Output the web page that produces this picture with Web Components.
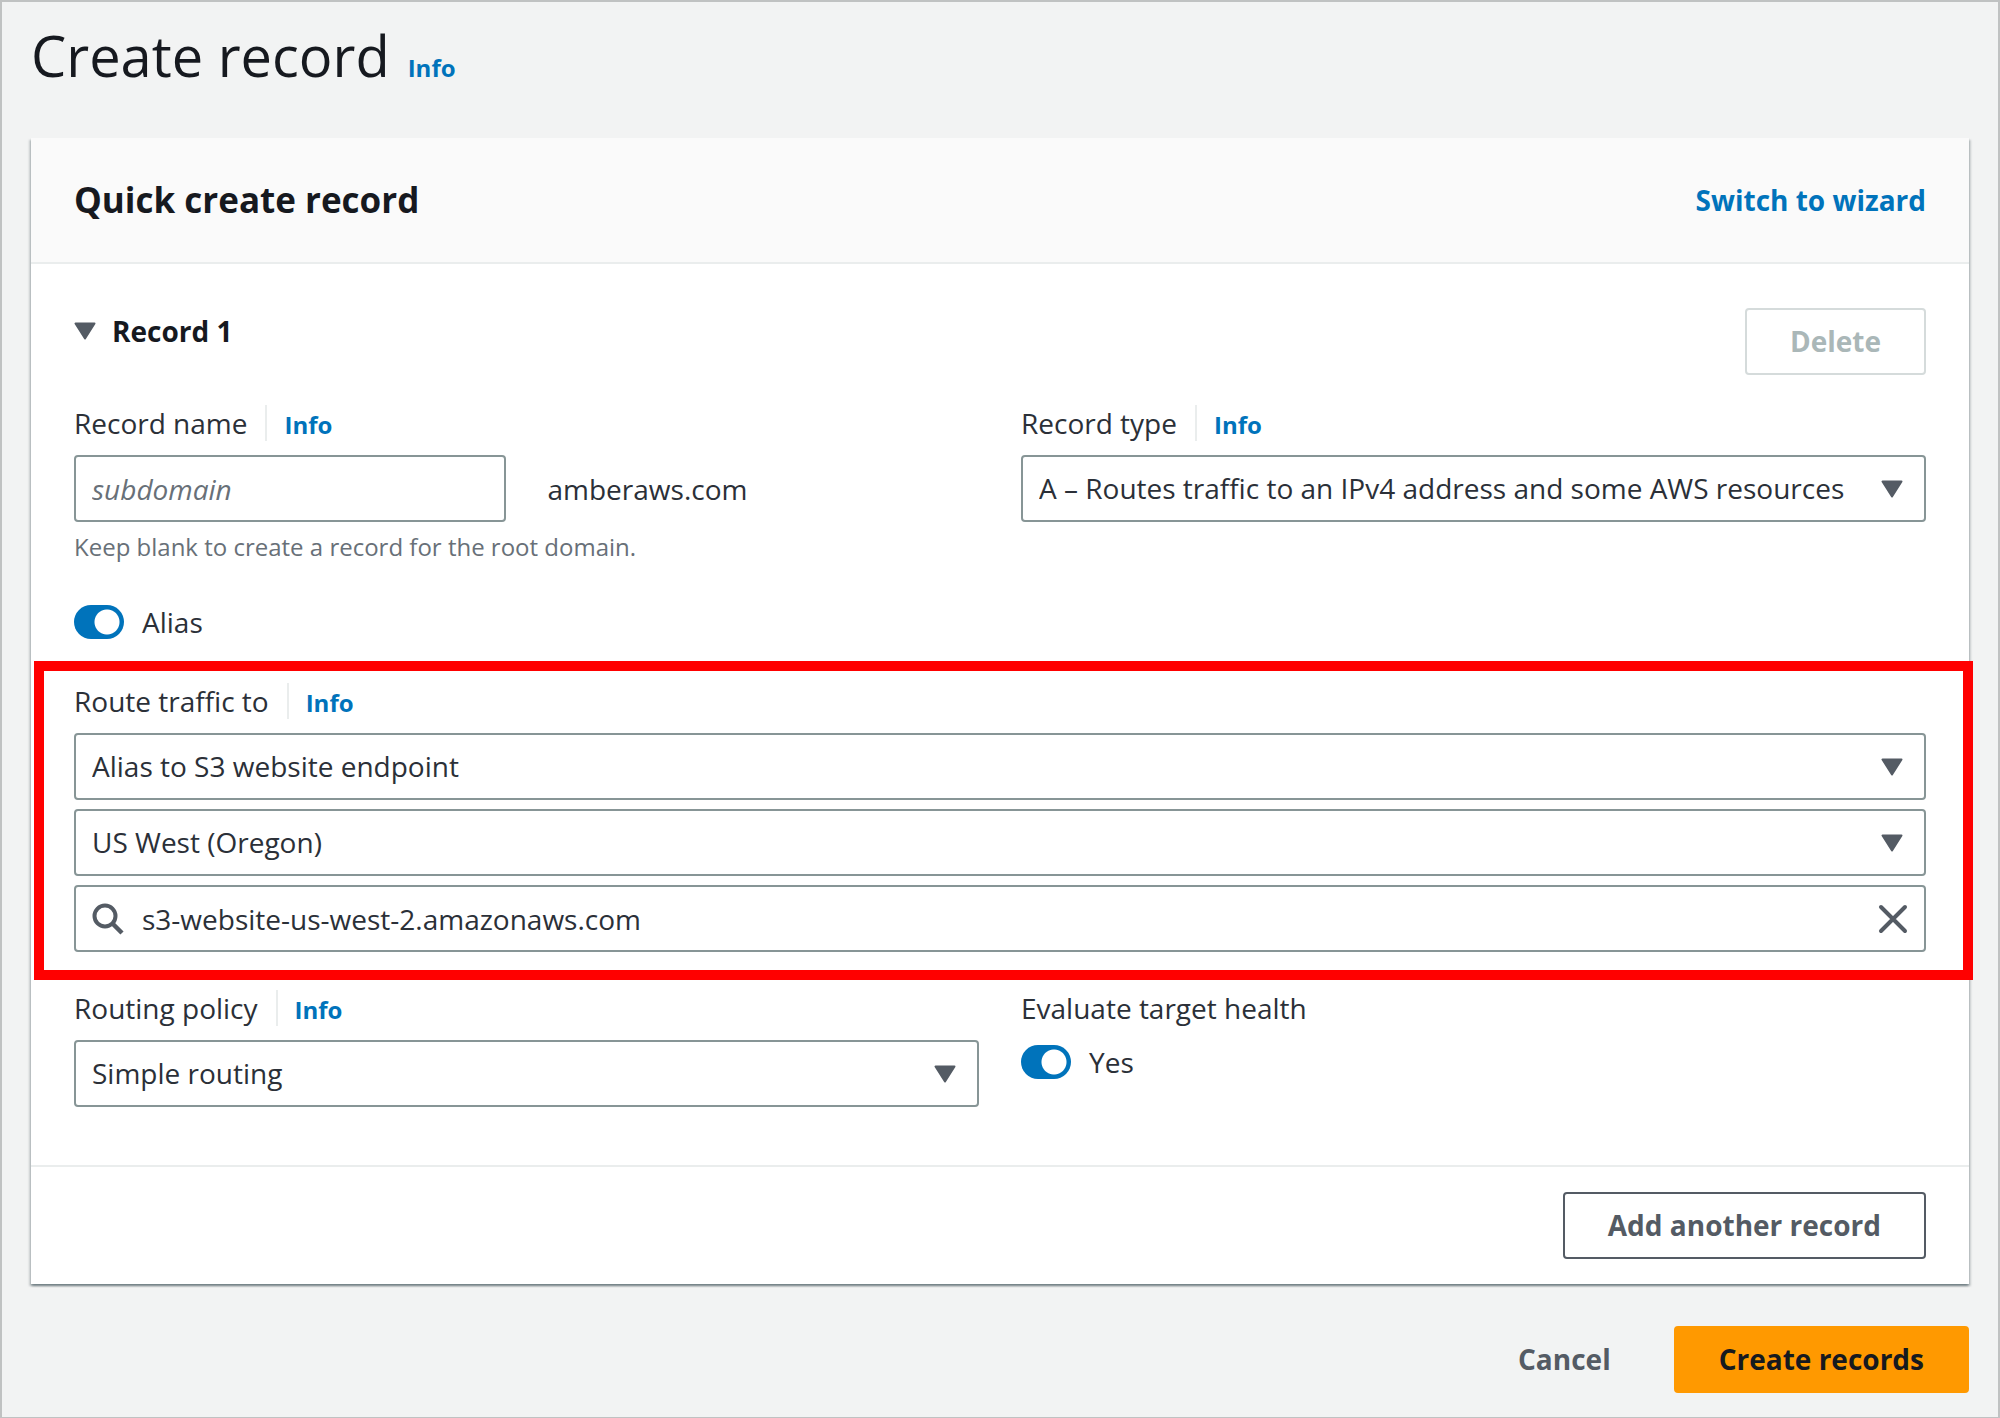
<!DOCTYPE html>
<html lang="en">
<head>
<meta charset="utf-8">
<meta name="viewport" content="width=device-width, initial-scale=1">
<title>Create record</title>
<style>
  :root {
    --text: #16191f;
    --body: #2b3038;
    --muted: #687078;
    --icon: #545b64;
    --blue: #0073bb;
    --line: #eaeded;
    --control: #879596;
  }
  body {
    margin: 0;
    background: #f2f3f3;
    color: var(--body);
    font: 28px/36px "Open Sans", "Noto Sans", sans-serif;
  }
</style>
</head>
<body>
<create-record-page></create-record-page>

<script>
const BASE = `
  *, *::before, *::after { box-sizing: border-box; }
  button, input, select { font: inherit; color: inherit; margin: 0; }
  button { cursor: pointer; }
  a { color: var(--blue); text-decoration: none; }
`;

const ARROW = `<svg viewBox="0 0 22 18" width="22" height="18" aria-hidden="true"><path d="M1.500 1.500h19L11 16.500z" fill="#545b64" stroke="#545b64" stroke-width="2" stroke-linejoin="round"/></svg>`;

class Base extends HTMLElement {
  constructor() {
    super();
    this.attachShadow({ mode: 'open' });
  }
  connectedCallback() {
    this.shadowRoot.innerHTML = `<style>${BASE}</style>` + this.render();
  }
  attr(name) { return this.getAttribute(name) || ''; }
}

/* Small "Info" help link */
customElements.define('info-link', class extends Base {
  render() {
    return `<style>
      :host { display: inline-block; }
      a { font-size: 24px; font-weight: 700; }
    </style><a href="#info">Info</a>`;
  }
});

/* Push button: normal, primary, link, or disabled */
customElements.define('app-button', class extends Base {
  render() {
    return `<style>
      :host { display: block; }
      button {
        display: block; height: 67px; padding: 0 43px 2px;
        border: 2px solid var(--icon); border-radius: 4px; background: #fff;
        color: var(--icon); font-weight: 700; white-space: nowrap;
      }
      :host([variant="primary"]) button { background: #ff9900; border-color: #ff9900; color: var(--text); }
      :host([variant="link"]) button { background: none; border-color: transparent; }
      button:disabled { color: #aab7b8; border-color: #d5dbdb; cursor: default; }
    </style><button type="button" ${this.hasAttribute('disabled') ? 'disabled' : ''}><slot></slot></button>`;
  }
});

/* Label line, with an optional help link after a thin rule */
const LABEL_CSS = `
  .label { display: flex; height: 36px; margin-bottom: 14px; white-space: nowrap; }
  .label info-link { margin-left: 18px; padding-left: 17px; border-left: 2px solid var(--line); }
`;
const labelRow = (el, id) => `<div class="label"><label for="${id}">${el.attr('label')}</label>${el.hasAttribute('info') ? '<info-link></info-link>' : ''}</div>`;

/* Drop-down */
customElements.define('select-field', class extends Base {
  render() {
    return `<style>${LABEL_CSS}
      :host { display: block; min-width: 0; }
      .box { display: grid; align-items: center; }
      .box > * { grid-area: 1 / 1; }
      select {
        appearance: none; width: 100%; height: 67px; padding: 0 60px 2px 16px;
        border: 2px solid var(--control); border-radius: 4px; background: #fff;
      }
      svg { justify-self: end; margin-right: 23px; pointer-events: none; }
    </style>
    ${this.hasAttribute('label') ? labelRow(this, 'control') : ''}
    <div class="box">
      <select id="control" ${this.hasAttribute('hint') ? `aria-label="${this.attr('hint')}"` : ''}><option>${this.attr('value')}</option></select>
      ${ARROW}
    </div>`;
  }
});

/* Record name input, followed by the hosted zone's domain */
customElements.define('name-field', class extends Base {
  render() {
    return `<style>${LABEL_CSS}
      :host { display: block; min-width: 0; }
      .row { display: grid; grid-template-columns: 1fr 1fr; gap: 42px; align-items: center; }
      input {
        width: 100%; height: 67px; padding: 0 16px;
        border: 2px solid var(--control); border-radius: 4px; background: #fff;
      }
      input::placeholder { color: var(--muted); font-style: italic; opacity: 1; }
      p { margin: 7px 0 0; font-size: 24px; color: var(--muted); }
    </style>
    ${labelRow(this, 'control')}
    <div class="row">
      <input id="control" type="text" placeholder="${this.attr('placeholder')}" aria-describedby="help">
      <span>${this.attr('suffix')}</span>
    </div>
    <p id="help">${this.attr('help')}</p>`;
  }
});

/* Search box with a clear button */
customElements.define('search-field', class extends Base {
  render() {
    return `<style>
      :host { display: block; }
      .box {
        display: flex; align-items: center; height: 67px; padding: 0 16px;
        border: 2px solid var(--control); border-radius: 4px; background: #fff;
      }
      input { flex: 1; min-width: 0; height: 60px; padding: 0; margin-left: 18px; border: 0; outline: 0; background: none; }
      button { display: flex; padding: 0; border: 0; background: none; }
      svg { display: block; fill: none; stroke: var(--icon); }
    </style>
    <div class="box">
      <svg viewBox="0 0 32 32" width="32" height="32" aria-hidden="true">
        <circle cx="13" cy="13" r="10.500" stroke-width="4"/><path d="M20.500 20.500L30 30" stroke-width="4.500"/>
      </svg>
      <input type="text" aria-label="${this.attr('hint')}" value="${this.attr('value')}">
      <button type="button" aria-label="Clear">
        <svg viewBox="0 0 30 30" width="30" height="30" aria-hidden="true"><path d="M3 3l24 24M27 3L3 27" stroke-width="4" stroke-linecap="round"/></svg>
      </button>
    </div>`;
  }
});

/* On/off switch, with an optional heading above */
customElements.define('toggle-field', class extends Base {
  render() {
    return `<style>${LABEL_CSS}
      :host { display: block; }
      .switch { display: flex; align-items: center; gap: 18px; width: max-content; }
      :host([label]) .switch { margin-top: 18px; }
      input {
        appearance: none; width: 50px; height: 34px; border-radius: 17px;
        background: radial-gradient(circle at 33px 17px, #fff 12px, transparent 13px) #0073bb;
      }
      input:not(:checked) { background: radial-gradient(circle at 17px 17px, #fff 12px, transparent 13px) #879596; }
    </style>
    ${this.hasAttribute('label') ? labelRow(this, 'control') : ''}
    <label class="switch"><input id="control" type="checkbox" role="switch" checked><span><slot></slot></span></label>`;
  }
});

/* White card with a shaded header and a footer */
customElements.define('form-card', class extends Base {
  render() {
    return `<style>
      :host {
        display: block; background: #fff;
        box-shadow: 0 2px 2px rgba(0, 28, 36, .35), 2px 2px 2px rgba(0, 28, 36, .15), -2px 2px 2px rgba(0, 28, 36, .15);
      }
      header {
        display: flex; align-items: center; justify-content: space-between;
        height: 126px; padding: 0 43px; background: #fafafa; border-bottom: 2px solid var(--line);
      }
      .body { padding: 44px 43px 58px; }
      footer { display: flex; justify-content: flex-end; padding: 25px 43px; border-top: 2px solid var(--line); }
    </style>
    <header><slot name="title"></slot><slot name="action"></slot></header>
    <div class="body"><slot></slot></div>
    <footer><slot name="footer"></slot></footer>`;
  }
});

/* Red frame that is laid over the group it marks */
customElements.define('marked-group', class extends Base {
  render() {
    return `<style>
      :host { display: grid; gap: 9px; position: relative; }
      .frame { position: absolute; inset: -22px -47px -28px -40px; border: 10px solid #f00; pointer-events: none; }
    </style><slot></slot><div class="frame"></div>`;
  }
});

customElements.define('create-record-page', class extends Base {
  render() {
    return `<style>
      :host { display: block; min-height: 100vh; padding: 16px 29px 24px; border: 2px solid #c0c2c2; box-sizing: border-box; }
      .title { display: flex; align-items: baseline; gap: 18px; margin-bottom: 46px; }
      h1 { margin: 0; font-size: 56px; line-height: 74px; font-weight: 400; color: var(--text); }
      h2 { margin: 0; font-size: 35px; line-height: 46px; font-weight: 700; color: var(--text); }
      .wizard { font-weight: 700; }
      .head { display: flex; align-items: flex-start; justify-content: space-between; margin-bottom: 30px; }
      .toggle {
        display: flex; align-items: center; gap: 16px; padding: 0; border: 0; background: none;
        line-height: 46px; font-weight: 700; color: var(--text);
      }
      .grid { display: grid; grid-template-columns: 1fr 1fr; gap: 42px; }
      .alias { margin: 39px 0 43px; }
      .policy { margin-top: 38px; }
      .actions { display: flex; justify-content: flex-end; gap: 18px; margin-top: 42px; }
    </style>
    <div class="title"><h1>Create record</h1><info-link></info-link></div>
    <form-card>
      <h2 slot="title">Quick create record</h2>
      <a slot="action" class="wizard" href="#wizard">Switch to wizard</a>
      <div class="head">
        <button class="toggle" type="button" aria-expanded="true">${ARROW}<span>Record 1</span></button>
        <app-button disabled>Delete</app-button>
      </div>
      <div class="grid">
        <name-field label="Record name" info placeholder="subdomain" suffix="amberaws.com" help="Keep blank to create a record for the root domain."></name-field>
        <select-field label="Record type" info value="A – Routes traffic to an IPv4 address and some AWS resources"></select-field>
      </div>
      <toggle-field class="alias">Alias</toggle-field>
      <marked-group>
        <select-field label="Route traffic to" info value="Alias to S3 website endpoint"></select-field>
        <select-field hint="Region" value="US West (Oregon)"></select-field>
        <search-field hint="Endpoint" value="s3-website-us-west-2.amazonaws.com"></search-field>
      </marked-group>
      <div class="grid policy">
        <select-field label="Routing policy" info value="Simple routing"></select-field>
        <toggle-field label="Evaluate target health">Yes</toggle-field>
      </div>
      <app-button slot="footer">Add another record</app-button>
    </form-card>
    <div class="actions">
      <app-button variant="link">Cancel</app-button>
      <app-button variant="primary">Create records</app-button>
    </div>`;
  }
});
</script>
</body>
</html>
